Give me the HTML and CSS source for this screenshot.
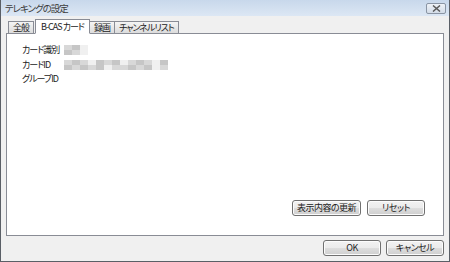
FILE: index.html
```html
<!DOCTYPE html>
<html lang="ja">
<head>
  <meta charset="UTF-8">
  <title>テレキングの設定</title>
  <link rel="stylesheet" href="styles.css">
</head>
<body>
<div class="window">
  <div class="titlebar">
    <span class="title">テレキングの設定</span>
    <button class="close" aria-label="閉じる">
      <svg width="9" height="7" viewBox="0 0 9 7"><path d="M1 0.5 L8 6.5 M8 0.5 L1 6.5" stroke="#5a5a5a" stroke-width="1.5"/></svg>
    </button>
  </div>
  <div class="content">
    <div class="tabs">
      <div class="tab">全般</div>
      <div class="tab active">B-CAS カード</div>
      <div class="tab">録画</div>
      <div class="tab">チャンネルリスト</div>
    </div>
    <div class="panel">
      <div class="fields">
        <div class="label">カード識別</div>
        <div class="blur short">
          <span class="c2"></span><span class="c3"></span><span class="c1"></span>
          <span class="c3"></span><span class="c2"></span><span class="c1"></span>
        </div>
        <div class="label">カードID</div>
        <div class="blur long">
          <span class="c2"></span><span class="c3"></span><span class="c2"></span><span class="c1"></span><span class="c3"></span><span class="c2"></span><span class="c3"></span><span class="c1"></span><span class="c2"></span><span class="c3"></span><span class="c2"></span><span class="c1"></span><span class="c3"></span>
          <span class="c3"></span><span class="c2"></span><span class="c3"></span><span class="c2"></span><span class="c3"></span><span class="c1"></span><span class="c2"></span><span class="c2"></span><span class="c3"></span><span class="c2"></span><span class="c3"></span><span class="c1"></span><span class="c2"></span>
        </div>
        <div class="label">グループID</div>
        <div></div>
      </div>
      <div class="panel-actions">
        <button class="btn wide">表示内容の更新</button>
        <button class="btn">リセット</button>
      </div>
    </div>
    <div class="footer">
      <button class="btn">OK</button>
      <button class="btn">キャンセル</button>
    </div>
  </div>
</div>
</body>
</html>
```

FILE: styles.css
```css
* {
    box-sizing: border-box;
}

body {
    margin: 0;
    font-family: "Noto Sans CJK JP", "DejaVu Sans", sans-serif;
    font-size: 9px;
    font-feature-settings: "palt";
    color: #222;
}

.window {
    width: 450px;
    height: 262px;
    background: #f0f0f0;
    border: 1px solid #5a5f66;
    border-top: 0;
    display: flex;
    flex-direction: column;
}

.titlebar {
    height: 16px;
    background: linear-gradient(#c8d8eb, #dce7f4);
    display: flex;
    align-items: center;
    justify-content: space-between;
    padding: 0 3px 0 4px;
}

.title {
    color: #3c3c3c;
    font-size: 9.5px;
    letter-spacing: -1px;
    line-height: 16px;
}

.close {
    width: 20px;
    height: 11px;
    margin-top: 1px;
    padding: 0;
    border: 1px solid #8a95a4;
    border-radius: 2px;
    background: linear-gradient(#eef2f7, #d3dce8);
    display: flex;
    align-items: center;
    justify-content: center;
}

.content {
    flex: 1;
    display: flex;
    flex-direction: column;
    padding: 3px 5px 0 5px;
}

.tabs {
    display: flex;
    align-items: flex-end;
    padding-left: 2px;
    height: 14px;
    position: relative;
    z-index: 1;
}

.tab {
    height: 12px;
    line-height: 11px;
    padding: 0 4px;
    letter-spacing: -1px;
    border: 1px solid #898c95;
    border-bottom: 0;
    background: linear-gradient(#f4f4f4, #dcdcdc);
    margin-right: -1px;
    white-space: nowrap;
}

.tab.active {
    height: 15px;
    line-height: 13px;
    background: #fff;
    padding: 0 5px;
    margin: 0 -1px -1px 1px;
    border-bottom: 1px solid #fff;
    position: relative;
    z-index: 2;
}

.tab:first-child {
    margin-right: 0;
}

.panel {
    height: 203px;
    background: #fff;
    border: 1px solid #898c95;
    display: flex;
    flex-direction: column;
    justify-content: space-between;
    padding: 11px 18px 19px 15px;
}

.fields {
    display: grid;
    grid-template-columns: 42px auto;
    row-gap: 4.5px;
    align-items: center;
    justify-items: start;
}

.label {
    line-height: 10px;
    height: 10px;
    letter-spacing: -1px;
    white-space: nowrap;
}

.blur {
    display: flex;
    flex-wrap: wrap;
    height: 10px;
}

.blur.short {
    width: 24px;
}

.blur.long {
    width: 104px;
}

.blur span {
    width: 8px;
    height: 5px;
}

.c1 { background: #f0f0f0; }
.c2 { background: #d8d8d8; }
.c3 { background: #c6c6c6; }

.panel-actions {
    display: flex;
    justify-content: flex-end;
    gap: 6px;
}

.btn {
    font-family: inherit;
    font-size: 9px;
    font-feature-settings: "palt";
    letter-spacing: -0.5px;
    color: #222;
    height: 16px;
    line-height: 12px;
    width: 58px;
    padding: 0;
    border: 1px solid #707070;
    border-radius: 3px;
    background: linear-gradient(#f2f2f2 0%, #ebebeb 50%, #dddddd 51%, #cfcfcf 100%);
    box-shadow: inset 0 0 0 1px #fcfcfc;
}

.btn.wide {
    width: 69px;
}

.footer {
    display: flex;
    justify-content: flex-end;
    gap: 5px;
    padding: 4px 0 0 0;
}
```
